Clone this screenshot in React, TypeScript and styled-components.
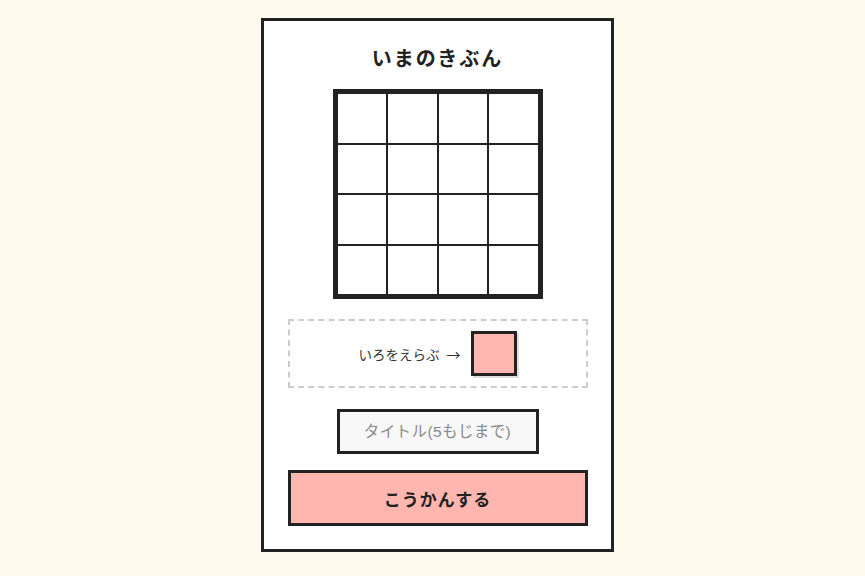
import React from 'react'
import styled, { createGlobalStyle } from 'styled-components'

const fontStack = `'Liberation Sans', 'Noto Sans CJK JP', sans-serif`

const GlobalStyle = createGlobalStyle`
  html, body {
    margin: 0;
    padding: 0;
    background: #fff9ee;
  }
  body {
    font-family: ${fontStack};
    color: #222;
  }
  * {
    box-sizing: border-box;
  }
`

const Page = styled.div`
  min-height: 576px;
  display: flex;
  justify-content: center;
  align-items: flex-start;
  padding: 18px 0 0 10px;
`

const Card = styled.div`
  width: 353px;
  background: #fff;
  border: 3px solid #222;
  padding: 24px 24px 23px;
  display: flex;
  flex-direction: column;
  align-items: center;
`

const Title = styled.h2`
  margin: 0 0 16px;
  font-size: 20px;
  line-height: 28px;
  font-weight: 700;
  letter-spacing: 2px;
  color: #222;
`

const Grid = styled.div`
  width: 210px;
  height: 210px;
  border: 4px solid #222;
  display: grid;
  grid-template-columns: repeat(4, 1fr);
  grid-template-rows: repeat(4, 1fr);
`

const Cell = styled.div`
  border: 1px solid #222;
  background: #fff;
`

const Picker = styled.div`
  margin-top: 20px;
  width: 300px;
  height: 69px;
  border: 2px dashed #ccc;
  display: flex;
  align-items: center;
  justify-content: center;
  gap: 10px;
`

const PickerLabel = styled.span`
  font-family: 'Noto Sans CJK JP', sans-serif;
  font-size: 13.5px;
  color: #333;
`

const Arrow = styled.span`
  font-family: 'Noto Sans CJK JP', sans-serif;
  font-feature-settings: 'fwid' 1;
  font-size: 14px;
  margin-left: 7px;
`

const Swatch = styled.div<{ $color: string }>`
  width: 46px;
  height: 45px;
  border: 3px solid #222;
  background: ${({ $color }) => $color};
  box-shadow: 2px 2px 0 #ddd;
`

const TitleInput = styled.input`
  margin-top: 21px;
  width: 202px;
  height: 45px;
  border: 3px solid #222;
  background: #f8f8f8;
  font-family: ${fontStack};
  font-size: 15.5px;
  letter-spacing: 0.4px;
  text-align: center;
  outline: none;
  color: #222;

  &::placeholder {
    color: #888;
  }
`

const SubmitButton = styled.button`
  margin-top: 16px;
  width: 300px;
  height: 56px;
  border: 3px solid #222;
  background: #ffb6af;
  font-family: ${fontStack};
  font-size: 17px;
  font-weight: 700;
  letter-spacing: 1px;
  color: #222;
  cursor: pointer;
`

const App = () => {
  const cells = Array.from({ length: 16 }, (_, i) => i)
  return (
    <>
      <GlobalStyle />
      <Page>
        <Card>
          <Title>いまのきぶん</Title>
          <Grid>
            {cells.map((i) => (
              <Cell key={i} />
            ))}
          </Grid>
          <Picker>
            <PickerLabel>
              いろをえらぶ<Arrow>→</Arrow>
            </PickerLabel>
            <Swatch $color='#ffb7b0' />
          </Picker>
          <TitleInput placeholder='タイトル(5もじまで)' maxLength={5} />
          <SubmitButton>こうかんする</SubmitButton>
        </Card>
      </Page>
    </>
  )
}

export default App
